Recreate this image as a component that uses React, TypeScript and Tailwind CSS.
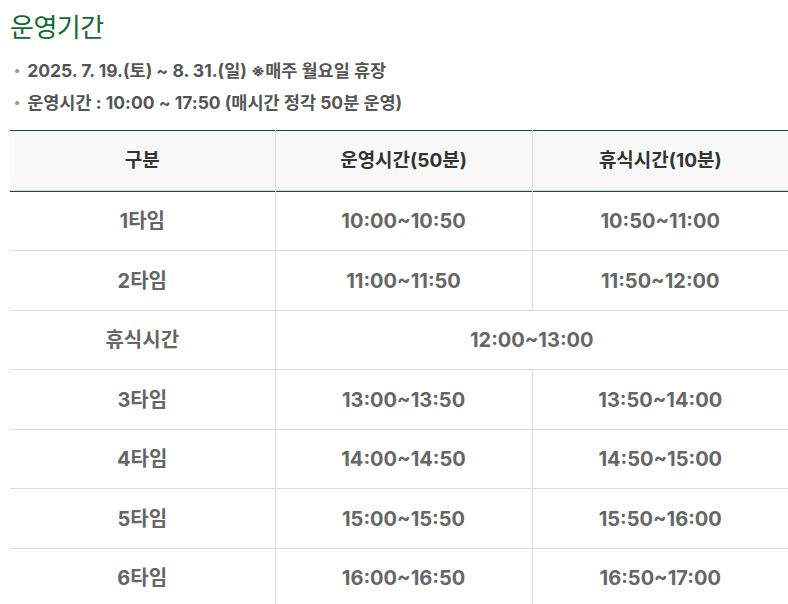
import React from 'react';

const rows: { label: string; run: string; rest?: string }[] = [
  { label: '1타임', run: '10:00~10:50', rest: '10:50~11:00' },
  { label: '2타임', run: '11:00~11:50', rest: '11:50~12:00' },
  { label: '휴식시간', run: '12:00~13:00' },
  { label: '3타임', run: '13:00~13:50', rest: '13:50~14:00' },
  { label: '4타임', run: '14:00~14:50', rest: '14:50~15:00' },
  { label: '5타임', run: '15:00~15:50', rest: '15:50~16:00' },
  { label: '6타임', run: '16:00~16:50', rest: '16:50~17:00' },
];

const font = { fontFamily: 'Inter, "Noto Sans CJK KR", sans-serif' };

const App: React.FC = () => {
  return (
    <div className="bg-white pl-[10px] pt-[11px] w-[788px] h-[604px] overflow-hidden" style={font}>
      <h2 className="text-[26px] leading-[34px] text-[#0e6b2c] font-normal tracking-[-0.5px]">운영기간</h2>

      <ul className="mt-[10px] text-[17.5px] font-bold text-[#555]">
        <li className="flex items-center h-[32px] pl-[4px]">
          <span className="text-[#999] text-[13px] mr-[7px]">•</span>
          2025. 7. 19.(토) ~ 8. 31.(일) ※매주 월요일 휴장
        </li>
        <li className="flex items-center h-[32px] pl-[4px]">
          <span className="text-[#999] text-[13px] mr-[7px]">•</span>
          운영시간 : 10:00 ~ 17:50 (매시간 정각 50분 운영)
        </li>
      </ul>

      <table className="mt-[11px] w-[778px] border-collapse table-fixed border-t border-[#0b5a24]">
        <colgroup>
          <col className="w-[265px]" />
          <col className="w-[257px]" />
          <col className="w-[256px]" />
        </colgroup>
        <thead>
          <tr className="bg-[#f9f9f9] border-b border-[#0b5a24]">
            {['구분', '운영시간(50분)', '휴식시간(10분)'].map((h, i) => (
              <th
                key={h}
                className={`h-[61px] text-[19px] font-bold text-[#333] text-center shadow-[inset_0_-1px_0_#d9d9d9] ${i > 0 ? 'border-l border-[#ddd]' : ''}`}
              >
                {h}
              </th>
            ))}
          </tr>
        </thead>
        <tbody>
          {rows.map((r, idx) => (
            <tr key={r.label} className="border-b border-[#ddd]">
              <td className={`${idx % 2 === 0 ? 'h-[59px]' : 'h-[60px]'} text-center text-[20px] font-bold text-[#666]`}>
                {r.label}
              </td>
              {r.rest ? (
                <>
                  <td className="text-center text-[20px] font-bold text-[#666] border-l border-[#ddd]">{r.run}</td>
                  <td className="text-center text-[20px] font-bold text-[#666] border-l border-[#ddd]">{r.rest}</td>
                </>
              ) : (
                <td colSpan={2} className="text-center text-[20px] font-bold text-[#666] border-l border-[#ddd]">
                  {r.run}
                </td>
              )}
            </tr>
          ))}
        </tbody>
      </table>
    </div>
  );
};

export default App;
